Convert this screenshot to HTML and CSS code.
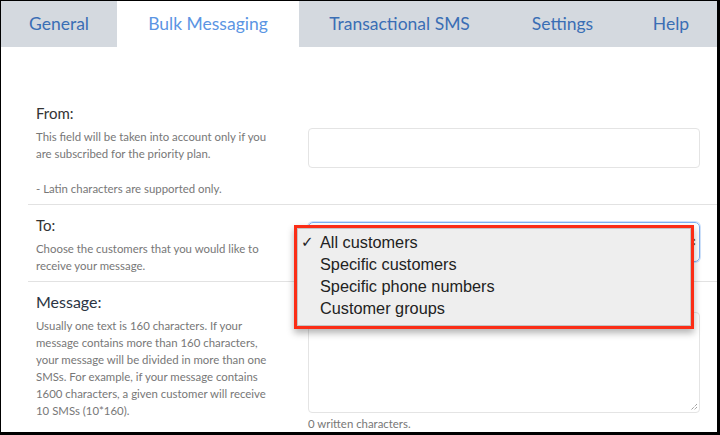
FILE: index.html
```html
<!DOCTYPE html>
<html lang="en">
<head>
<meta charset="utf-8">
<title>Bulk Messaging</title>
<link rel="stylesheet" href="styles.css">
</head>
<body>
<div class="frame">
  <nav class="tabs">
    <a class="tab tab-general">General</a>
    <a class="tab tab-bulk active">Bulk Messaging</a>
    <a class="tab tab-trans">Transactional SMS</a>
    <a class="tab tab-settings">Settings</a>
    <a class="tab tab-help">Help</a>
  </nav>

  <form class="form">
    <div class="row row-from">
      <div class="info">
        <div class="label">From:</div>
        <p class="desc">This field will be taken into account only if you<br>are subscribed for the priority plan.</p>
        <p class="desc desc-gap">- Latin characters are supported only.</p>
      </div>
      <div class="field field-from">
        <div class="input"></div>
      </div>
    </div>

    <div class="row row-to">
      <div class="info">
        <div class="label">To:</div>
        <p class="desc">Choose the customers that you would like to<br>receive your message.</p>
      </div>
      <div class="field field-to">
        <div class="select">
          <svg class="select-arrows" width="8" height="12" viewBox="0 0 8 12"><path d="M1 4.5 L4 1.5 L7 4.5 M1 7.5 L4 10.5 L7 7.5" fill="none" stroke="#555" stroke-width="1.4"/></svg>
        </div>
      </div>
    </div>

    <div class="row row-msg">
      <div class="info">
        <div class="label label-msg">Message:</div>
        <p class="desc">Usually one text is 160 characters. If your<br>message contains more than 160 characters,<br>your message will be divided in more than one<br>SMSs. For example, if your message contains<br>1600 characters, a given customer will receive<br>10 SMSs (10*160).</p>
      </div>
      <div class="field field-msg">
        <div class="textarea">
          <svg class="grip" width="9" height="9" viewBox="0 0 9 9"><path d="M8 2 L2 8 M8 5 L5 8" stroke="#777" stroke-width="1" stroke-dasharray="1 1"/></svg>
        </div>
        <div class="count">0 written characters.</div>
      </div>
    </div>
  </form>

  <div class="menu-highlight">
    <ul class="menu">
      <li class="opt checked"><span class="check">✓</span>All customers</li>
      <li class="opt">Specific customers</li>
      <li class="opt">Specific phone numbers</li>
      <li class="opt">Customer groups</li>
    </ul>
  </div>
</div>
</body>
</html>
```

FILE: styles.css
```css
* { box-sizing: border-box; }
html, body { margin: 0; padding: 0; background: #fff; }
body { font-family: Lato, "Noto Sans", sans-serif; }

.frame {
  position: relative;
  width: 720px;
  height: 435px;
  border: 1px solid #000;
  border-right-width: 3px;
  border-bottom-width: 3px;
  overflow: hidden;
  background: #fff;
}

.tabs {
  display: flex;
  height: 46px;
  background: #d4d9df;
}
.tab {
  display: flex;
  align-items: center;
  justify-content: center;
  font-size: 17.5px;
  color: #3a6eb5;
  padding-bottom: 1px;
}
.tab-general { width: 116px; }
.tab-bulk { width: 182px; }
.tab-trans { width: 201px; }
.tab-settings { width: 125px; }
.tab-help { flex: 1; }
.tab.active { background: #fff; color: #5b95e3; }

.form {
  margin: 0;
  padding: 56px 0 0 27px;
}
.row {
  display: grid;
  grid-template-columns: 254px 1fr;
  column-gap: 18px;
  padding: 0 17px 7px 8px;
}
.row + .row {
  border-top: 1px solid #e2e2e2;
  padding-top: 10px;
}
.label {
  font-size: 15px;
  line-height: 20px;
  color: #333;
}
.label-msg {
  font-size: 16px;
  color: #2b3543;
}
.desc {
  margin: 5px 0 0;
  font-size: 11.4px;
  line-height: 17px;
  color: #777;
}
.desc-gap { margin-top: 17.5px; }

.field-from { padding-top: 25px; }
.field-to { padding-top: 7px; }
.field-msg { padding-top: 20px; }

.input {
  height: 40px;
  border: 1px solid #e4e4e4;
  border-radius: 4px;
}
.select {
  position: relative;
  height: 40px;
  border: 1px solid #7cb0f2;
  border-radius: 5px;
  box-shadow: 0 0 0 1px #cfe2fb;
}
.select-arrows {
  position: absolute;
  right: 3px;
  top: 13px;
}
.textarea {
  position: relative;
  height: 101px;
  border: 1px solid #e4e4e4;
  border-radius: 4px;
}
.grip {
  position: absolute;
  right: 1px;
  bottom: 1px;
}
.count {
  margin-top: 2px;
  font-size: 11.4px;
  line-height: 17px;
  color: #777;
}

.menu-highlight {
  position: absolute;
  left: 293px;
  top: 224px;
  width: 400px;
  height: 104px;
  border: 3px solid #fb2d16;
  box-shadow: 0 4px 7px rgba(0,0,0,0.3);
}
.menu {
  list-style: none;
  margin: 0;
  padding: 2px 0 0 22px;
  height: 100%;
  background: #eeeeee;
  border: 1px solid #c4c4c4;
  font-family: "Liberation Sans", Arial, sans-serif;
  font-size: 16.3px;
  color: #222;
}
.opt {
  position: relative;
  height: 22px;
  line-height: 22px;
}
.check {
  position: absolute;
  left: -19px;
  top: 0;
  font-size: 15px;
  font-family: "DejaVu Sans", sans-serif;
}
```
